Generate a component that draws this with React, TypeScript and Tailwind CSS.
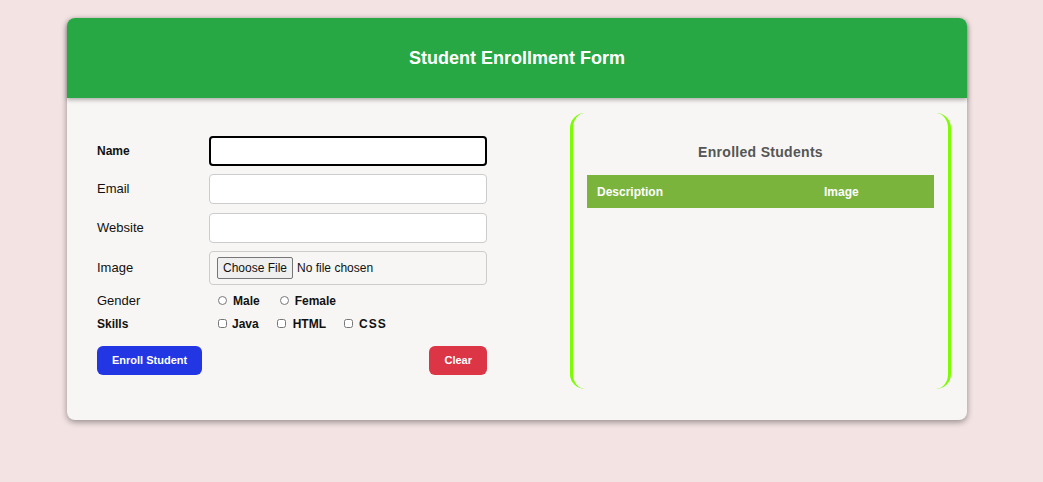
const font = { fontFamily: '"Liberation Sans", Arial, sans-serif' };

const Field = ({ label, bold, children }: { label: string; bold?: boolean; children: React.ReactNode }) => (
  <div className="flex items-center">
    <label className={`w-[112px] shrink-0 text-[#111] ${bold ? "text-[12px] font-bold" : "text-[13px]"}`}>{label}</label>
    {children}
  </div>
);

export default function App() {
  return (
    <div className="min-h-[482px] bg-[#f3e3e3] pt-[18px]" style={font}>
      <div className="ml-[67px] w-[900px] rounded-[8px] bg-[#f7f6f4] shadow-[0_2px_6px_rgba(0,0,0,0.4)]">
        <div className="flex h-[80px] items-center justify-center rounded-t-[8px] bg-[#28a745] shadow-[0_2px_4px_rgba(0,0,0,0.3)]">
          <h1 className="text-[18px] font-bold text-white">Student Enrollment Form</h1>
        </div>

        <div className="flex items-start pl-[30px] pr-[16px] pb-[31px]">
          <form className="flex w-[390px] flex-col pt-[38px]">
            <Field label="Name" bold>
              <input className="h-[30px] w-[278px] rounded-[4px] border-2 border-black bg-white outline-none" />
            </Field>
            <div className="mt-[8px]">
              <Field label="Email">
                <input className="h-[30px] w-[278px] rounded-[4px] border border-[#ccc] bg-white outline-none" />
              </Field>
            </div>
            <div className="mt-[9px]">
              <Field label="Website">
                <input className="h-[30px] w-[278px] rounded-[4px] border border-[#ccc] bg-white outline-none" />
              </Field>
            </div>
            <div className="mt-[8px]">
              <Field label="Image">
                <div className="flex h-[34px] w-[278px] items-center rounded-[4px] border border-[#ccc] px-[7px]">
                  <input
                    type="file"
                    className="text-[12px] text-[#111] file:mr-[4px] file:rounded-[2px] file:border file:border-[#767676] file:bg-[#efefef] file:px-[5px] file:py-[1px] file:text-[12px] file:text-[#111]"
                  />
                </div>
              </Field>
            </div>
            <div className="mt-[6px]">
              <Field label="Gender">
                <div className="flex items-center text-[12px] font-bold text-[#111]">
                  <input type="radio" name="g" className="ml-[9px] mr-[6px] h-[9px] w-[9px]" />
                  <span>Male</span>
                  <input type="radio" name="g" className="ml-[20px] mr-[6px] h-[9px] w-[9px]" />
                  <span>Female</span>
                </div>
              </Field>
            </div>
            <div className="mt-[4px]">
              <Field label="Skills" bold>
                <div className="flex items-center text-[12px] font-bold text-[#111]">
                  <input type="checkbox" className="ml-[9px] mr-[5px] h-[9px] w-[9px]" />
                  <span>Java</span>
                  <input type="checkbox" className="ml-[18px] mr-[7px] h-[9px] w-[9px]" />
                  <span>HTML</span>
                  <input type="checkbox" className="ml-[18px] mr-[6px] h-[9px] w-[9px]" />
                  <span className="tracking-[1px]">CSS</span>
                </div>
              </Field>
            </div>
            <div className="mt-[13px] flex justify-between">
              <button type="button" className="h-[29px] rounded-[6px] bg-[#2336e3] px-[15px] text-[11px] font-bold text-white">
                Enroll Student
              </button>
              <button type="button" className="h-[29px] rounded-[6px] bg-[#dc3545] px-[15px] text-[11px] font-bold text-white">
                Clear
              </button>
            </div>
          </form>

          <div className="ml-auto mt-[15px] h-[276px] w-[381px] rounded-[15px] border-x-[3px] border-[#7cfc00] px-[14px] pt-[29px]">
            <h2 className="text-center text-[14px] font-bold tracking-[0.3px] text-[#555]">Enrolled Students</h2>
            <table className="mt-[12px] w-full border-collapse">
              <thead>
                <tr className="h-[33px] bg-[#7ab43c] text-left text-[12px] font-bold text-white">
                  <th className="w-[227px] pl-[10px]">Description</th>
                  <th className="pl-[10px]">Image</th>
                </tr>
              </thead>
            </table>
          </div>
        </div>
      </div>
    </div>
  );
}
